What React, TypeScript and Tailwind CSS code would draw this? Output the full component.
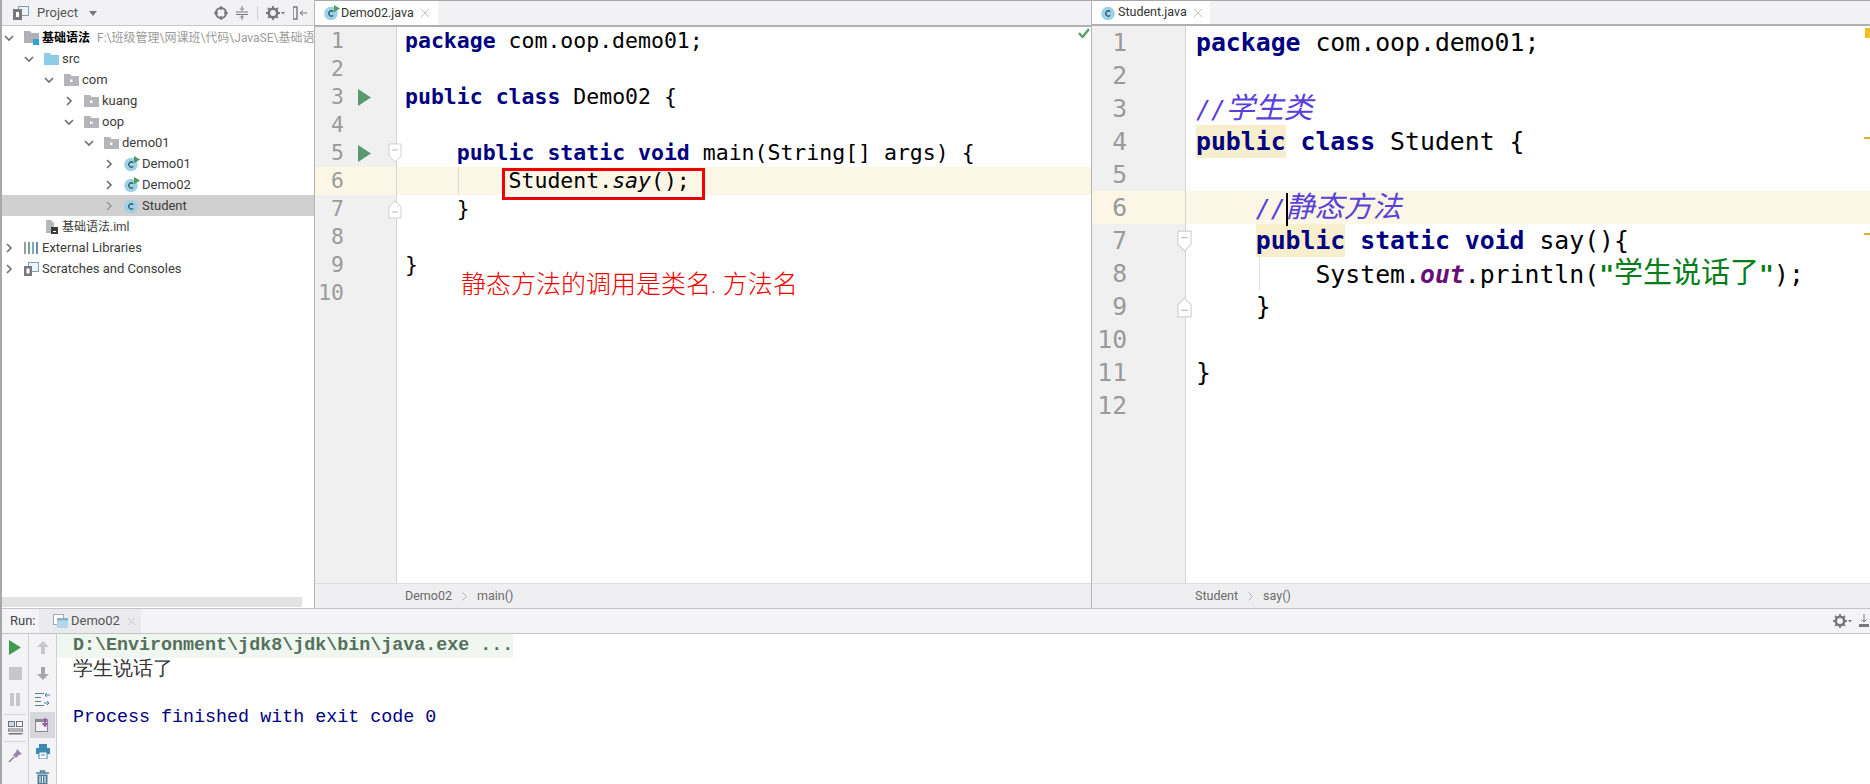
import React from "react";

const SANS = "font-['Roboto','Noto_Sans_CJK_SC',sans-serif]";
const MONO = "font-['DejaVu_Sans_Mono','Noto_Sans_CJK_SC',monospace]";

const Chevron = ({ open, light }: { open?: boolean; light?: boolean }) => (
  <svg width="12" height="12" viewBox="0 0 12 12" className="shrink-0">
    <path d={open ? "M2 4l4 4 4-4" : "M4 2l4 4-4 4"} fill="none" stroke={light ? "#9a9a9a" : "#6e6e6e"} strokeWidth="1.6" />
  </svg>
);

const Folder = ({ color = "#b4b4ba", dot = true }: { color?: string; dot?: boolean }) => (
  <svg width="15" height="13" viewBox="0 0 15 13" className="shrink-0">
    <path d="M0 1h6l1.5 2H15v10H0z" fill={color} />
    {dot && <rect x="6" y="6.5" width="2.5" height="2.5" fill="#fff" />}
  </svg>
);

const ModuleIcon = () => (
  <svg width="16" height="16" viewBox="0 0 16 16" className="shrink-0">
    <path d="M0 1h6l1.5 2H15v10H0z" fill="#b0b0b6" />
    <rect x="9" y="9" width="6" height="6" fill="#2fa3d8" />
  </svg>
);

const ClassIcon = ({ run, size = 14 }: { run?: boolean; size?: number }) => (
  <svg width={size + 2} height={size + 2} viewBox="0 0 16 16" className="shrink-0">
    <circle cx="7" cy="8.5" r="6.8" fill="#9ed0e6" />
    <path d="M9.2 6.6a2.6 2.6 0 1 0 0 3.8" fill="none" stroke="#28546a" strokeWidth="1.2" />
    {run && <path d="M10 0l6 3.6-6 3.6z" fill="#4f9a5e" />}
  </svg>
);

const ImlIcon = () => (
  <svg width="14" height="15" viewBox="0 0 14 15" className="shrink-0">
    <path d="M2 1h5l3 3v4H7v6H2z" fill="#b8b8bc" />
    <rect x="7" y="8" width="7" height="7" fill="#3c3c3c" />
    <rect x="9" y="12" width="3" height="1" fill="#fff" />
  </svg>
);

const LibIcon = () => (
  <svg width="15" height="14" viewBox="0 0 15 14" className="shrink-0">
    <rect x="0" y="1" width="2" height="12" fill="#9a9aa0" />
    <rect x="4" y="1" width="2" height="12" fill="#6fa880" />
    <rect x="8" y="1" width="2" height="12" fill="#7fa6c8" />
    <rect x="12" y="1" width="2" height="12" fill="#6a90b8" />
  </svg>
);

const ScratchIcon = () => (
  <svg width="15" height="14" viewBox="0 0 15 14" className="shrink-0">
    <rect x="4.5" y="0.5" width="10" height="9" fill="#eef4f8" stroke="#7aa0bc" />
    <rect x="0" y="4" width="8" height="10" fill="#77777c" />
    <rect x="2.5" y="6.5" width="3" height="5" fill="#fff" />
  </svg>
);

type Row = { d: number; arrow?: "o" | "c"; icon: React.ReactNode; label: React.ReactNode; sel?: boolean };

const rows: Row[] = [
  {
    d: 0, arrow: "o", icon: <ModuleIcon />,
    label: (
      <span className="text-[12px]">
        <span className="font-bold text-black">基础语法</span>
        <span className="ml-[7px] text-[#9b9b9b]">{"F:\\班级管理\\网课班\\代码\\JavaSE\\基础语"}</span>
      </span>
    ),
  },
  { d: 1, arrow: "o", icon: <Folder color="#8fcbe6" dot={false} />, label: "src" },
  { d: 2, arrow: "o", icon: <Folder />, label: "com" },
  { d: 3, arrow: "c", icon: <Folder />, label: "kuang" },
  { d: 3, arrow: "o", icon: <Folder />, label: "oop" },
  { d: 4, arrow: "o", icon: <Folder />, label: "demo01" },
  { d: 5, arrow: "c", icon: <ClassIcon run />, label: "Demo01" },
  { d: 5, arrow: "c", icon: <ClassIcon run />, label: "Demo02" },
  { d: 5, arrow: "c", icon: <ClassIcon />, label: "Student", sel: true },
  { d: 1, icon: <ImlIcon />, label: <span className="text-[12px]">基础语法.iml</span> },
  { d: 0, arrow: "c", icon: <LibIcon />, label: "External Libraries" },
  { d: 0, arrow: "c", icon: <ScratchIcon />, label: "Scratches and Consoles" },
];

const Gear = () => (
  <svg width="20" height="14" viewBox="0 0 20 14">
    <circle cx="7" cy="7" r="4.2" fill="none" stroke="#77777c" strokeWidth="2.6" />
    <path d="M7 0v14M0 7h14M2 2l10 10M12 2L2 12" stroke="#77777c" strokeWidth="1.8" strokeDasharray="2.4 9.2" />
    <path d="M15 6h4l-2 2.5z" fill="#77777c" />
  </svg>
);

const Sidebar = () => (
  <div className={`flex h-full w-[313px] shrink-0 flex-col border-r border-[#b4b4b4] bg-white ${SANS}`}>
    <div className="flex h-[26px] shrink-0 items-center border-b border-[#c8c8c8] bg-[#f2f2f4] pl-[11px] pr-[7px] text-[13px] text-[#555]">
      <svg width="16" height="14" viewBox="0 0 16 14">
        <rect x="5.5" y="0.5" width="10" height="9" fill="#eef4f8" stroke="#7aa0bc" />
        <rect x="0" y="3" width="9" height="11" fill="#77777c" />
        <rect x="3" y="6" width="3" height="5" fill="#fff" />
      </svg>
      <span className="ml-[8px]">Project</span>
      <svg width="8" height="6" viewBox="0 0 8 6" className="ml-[11px]"><path d="M0 1h8L4 6z" fill="#77777c" /></svg>
      <div className="flex-1" />
      <svg width="14" height="14" viewBox="0 0 14 14">
        <circle cx="7" cy="7" r="5" fill="none" stroke="#77777c" strokeWidth="2.2" />
        <path d="M7 0v4M7 10v4M0 7h4M10 7h4" stroke="#77777c" strokeWidth="1.5" />
      </svg>
      <svg width="14" height="14" viewBox="0 0 14 14" className="ml-[7px]">
        <path d="M1 6h12M1 8.5h12M7 0v4M5 2.4L7 4.4 9 2.4M7 14v-4M5 11.6L7 9.6 9 11.6" fill="none" stroke="#77777c" />
      </svg>
      <div className="mx-[8px] h-[14px] w-px bg-[#d0d0d0]" />
      <Gear />
      <svg width="14" height="14" viewBox="0 0 14 14" className="ml-[7px]">
        <rect x="0" y="1" width="4" height="12" fill="none" stroke="#77777c" strokeWidth="1.4" />
        <path d="M7 7h7M7 7l3-2.5M7 7l3 2.5" fill="none" stroke="#77777c" />
      </svg>
    </div>
    <div className="min-h-0 flex-1 overflow-hidden pt-[1px]">
      {rows.map((r, i) => (
        <div
          key={i}
          className={`flex h-[21px] items-center whitespace-nowrap text-[13px] text-[#3c3c3c] ${r.sel ? "bg-[#d0d0d0]" : ""}`}
          style={{ paddingLeft: 1 + r.d * 20 }}
        >
          <span className="flex w-[21px] shrink-0 items-center justify-start">
            {r.arrow && <Chevron open={r.arrow === "o"} light={r.sel} />}
          </span>
          <span className="flex w-[17px] shrink-0 items-center">{r.icon}</span>
          <span className="ml-[1px]">{r.label}</span>
        </div>
      ))}
    </div>
    <div className="mb-[1px] h-[10px] w-[300px] shrink-0 bg-[#e2e2e2]" />
  </div>
);

const K = ({ children }: { children: React.ReactNode }) => <span className="font-bold text-[#000080]">{children}</span>;
const Cjk = ({ children }: { children: React.ReactNode }) => <span className="text-[29px]">{children}</span>;

const Fold = ({ end, w = 14, h = 20 }: { end?: boolean; w?: number; h?: number }) => (
  <svg width={w} height={h} viewBox="0 0 14 20" className="shrink-0">
    <path
      d={end ? "M1 19V8l6-6 6 6v11z" : "M1 1h12v12l-6 6-6-6z"}
      fill="#fff"
      stroke="#d0d0d0"
    />
    <path d={end ? "M4 13h6" : "M4 7h6"} stroke="#b8b8b8" />
  </svg>
);

const Run = () => (
  <svg width="13" height="17" viewBox="0 0 13 17" className="shrink-0"><path d="M0 0l13 8.5L0 17z" fill="#5a9a70" /></svg>
);

const Tab = ({ name, run, w, h }: { name: string; run?: boolean; w: string; h: string }) => (
  <div className={`flex shrink-0 border-t border-[#a8a8a8] border-b-2 border-b-[#b0b0b0] bg-[#f2f2f4] ${h} ${SANS}`}>
    <div className={`flex h-full items-center bg-white pl-[9px] text-[12.5px] text-[#333] ${w}`}>
      <ClassIcon run={run} />
      <span className="ml-[1px]">{name}</span>
      <svg width="8" height="8" viewBox="0 0 8 8" className="ml-[7px]"><path d="M0 0l8 8M8 0L0 8" stroke="#c4c4c4" /></svg>
    </div>
  </div>
);

const leftLines: { run?: boolean; fold?: "s" | "e"; hl?: boolean; c?: React.ReactNode }[] = [
  { c: <><K>package</K> com.oop.demo01;</> },
  {},
  { run: true, c: <><K>public</K> <K>class</K> Demo02 {"{"}</> },
  {},
  { run: true, fold: "s", c: <>{"    "}<K>public</K> <K>static</K> <K>void</K> main(String[] args) {"{"}</> },
  { hl: true, c: <>{"        "}Student.<i>say</i>();</> },
  { fold: "e", c: <>{"    }"}</> },
  {},
  { c: "}" },
  {},
];

const LeftEditor = () => (
  <div className="flex h-full w-[777px] shrink-0 flex-col border-r border-[#b4b4b4] bg-white">
    <Tab name="Demo02.java" run w="w-[123px]" h="h-[27px]" />
    <div className="relative flex min-h-0 flex-1 flex-col">
      {leftLines.map((l, i) => (
        <div key={i} className={`flex h-[28px] shrink-0 items-center ${l.hl ? "bg-[#fcf6e6]" : ""}`}>
          <div className={`flex h-full w-[82px] shrink-0 items-center border-r border-[#d4d4d4] ${l.hl ? "" : "bg-[#f0f0f1]"}`}>
            <span className={`w-[29px] shrink-0 text-right text-[21.4px] text-[#9a9a9a] ${MONO}`}>{i + 1}</span>
            <span className="ml-[14px] w-[13px] shrink-0">{l.run && <Run />}</span>
            <span className="ml-[17px]">{l.fold && <Fold end={l.fold === "e"} />}</span>
          </div>
          <pre className={`ml-[8px] text-[21.5px] leading-[28px] text-black ${MONO}`}>{l.c}</pre>
        </div>
      ))}
      <div className="w-[82px] flex-1 border-r border-[#d4d4d4] bg-[#f0f0f1]" />
      <div className="absolute left-[143px] top-[140px] h-[28px] w-px bg-[#dcdcdc]" />
      <div className="absolute left-[187px] top-[141px] h-[32px] w-[203px] border-[3px] border-[#f00000]" />
      <div className={`absolute left-[146px] top-[241px] whitespace-pre text-[25px] font-extralight leading-[34px] text-[#f00000] ${SANS}`}>静态方法的调用是类名. 方法名</div>
      <svg width="12" height="10" viewBox="0 0 12 10" className="absolute right-[1px] top-[1px]">
        <path d="M1 5l3.5 4L11 1" fill="none" stroke="#5f9a6e" strokeWidth="2.4" />
      </svg>
    </div>
    <Crumb a="Demo02" b="main()" ml="ml-[90px]" gap="ml-[10px]" />
  </div>
);

const Crumb = ({ a, b, ml, gap }: { a: string; b: string; ml: string; gap: string }) => (
  <div className={`flex h-[25px] shrink-0 items-center border-t border-[#dcdcdc] bg-[#efeff1] text-[12.5px] text-[#6a6a6a] ${SANS}`}>
    <span className={ml}>{a}</span>
    <svg width="5" height="9" viewBox="0 0 5 9" className={gap}><path d="M0.5 0.5l4 4-4 4" fill="none" stroke="#b0b0b0" /></svg>
    <span className={gap}>{b}</span>
  </div>
);

const Word = ({ children }: { children: React.ReactNode }) => (
  <span className="inline-block h-[33px] bg-[#f7eecd] align-top font-bold text-[#000080]">{children}</span>
);

const rightLines: { fold?: "s" | "e"; hl?: boolean; c?: React.ReactNode }[] = [
  { c: <><K>package</K> com.oop.demo01;</> },
  {},
  { c: <i className="text-[#5840d8]">//<Cjk>学生类</Cjk></i> },
  { c: <><Word>public</Word> <K>class</K> Student {"{"}</> },
  {},
  { hl: true, c: <i className="text-[#5840d8]">{"    //"}<span className="relative"><span className="absolute left-0 top-[-1px] h-[33px] w-[2px] bg-black" /></span><Cjk>静态方法</Cjk></i> },
  { fold: "s", c: <>{"    "}<Word>public</Word> <K>static</K> <K>void</K> say(){"{"}</> },
  { c: <>{"        "}System.<b className="italic text-[#660e7a]">out</b>.println(<span className="font-bold text-[#067d17]">"<Cjk><span className="font-normal">学生说话了</span></Cjk>"</span>);</> },
  { fold: "e", c: <>{"    }"}</> },
  {},
  { c: "}" },
  {},
];

const RightEditor = () => (
  <div className="flex h-full min-w-0 flex-1 flex-col bg-white">
    <Tab name="Student.java" w="w-[118px]" h="h-[26px]" />
    <div className="relative flex min-h-0 flex-1 flex-col overflow-hidden">
      {rightLines.map((l, i) => (
        <div key={i} className={`flex h-[33px] shrink-0 items-center ${l.hl ? "bg-[#fcf6e6]" : ""}`}>
          <div className={`flex h-full w-[94px] shrink-0 items-center border-r border-[#d4d4d4] ${l.hl ? "" : "bg-[#f0f0f1]"}`}>
            <span className={`w-[35px] shrink-0 text-right text-[24.7px] text-[#9a9a9a] ${MONO}`}>{i + 1}</span>
            <span className="ml-[49px]">{l.fold && <Fold end={l.fold === "e"} w={17} h={22} />}</span>
          </div>
          <pre className={`ml-[10px] h-[33px] text-[24.8px] leading-[33px] text-black ${MONO}`}>{l.c}</pre>
        </div>
      ))}
      <div className="w-[94px] flex-1 border-r border-[#d4d4d4] bg-[#f0f0f1]" />
      <div className="absolute left-[167px] top-[231px] h-[33px] w-px bg-[#e0e0e0]" />
      <div className="absolute right-0 top-[2px] h-[10px] w-[5px] bg-[#f0c020]" />
      <div className="absolute right-0 top-[111px] h-[2px] w-[6px] bg-[#e8b030]" />
      <div className="absolute right-0 top-[207px] h-[2px] w-[6px] bg-[#e8b030]" />
    </div>
    <Crumb a="Student" b="say()" ml="ml-[103px]" gap="ml-[10px]" />
  </div>
);

const ToolCell = ({ children, sel }: { children: React.ReactNode; sel?: boolean }) => (
  <div className={`flex h-[26px] w-[25px] shrink-0 items-center justify-center ${sel ? "bg-[#d8d8dc]" : ""}`}>{children}</div>
);

const RunPanel = () => (
  <div className="flex min-h-0 flex-1 flex-col">
    <div className={`flex h-[26px] shrink-0 items-center border-y border-[#c4c4c4] bg-[#f4f4f6] text-[13px] text-[#444] ${SANS}`}>
      <span className="ml-[8px] w-[29px]">Run:</span>
      <div className="flex h-full w-[102px] items-center bg-[#ebebed] pl-[14px]">
        <svg width="15" height="14" viewBox="0 0 15 14">
          <rect x="0.5" y="0.5" width="10" height="10" fill="#fff" stroke="#a8a8ac" />
          <rect x="4" y="4" width="11" height="10" fill="#b4d8ea" />
          <rect x="4" y="4" width="11" height="2.5" fill="#7fb4d0" />
        </svg>
        <span className="ml-[3px] text-[#555]">Demo02</span>
        <svg width="7" height="7" viewBox="0 0 7 7" className="ml-[8px]"><path d="M0 0l7 7M7 0L0 7" stroke="#c8c8c8" /></svg>
      </div>
      <div className="flex-1" />
      <Gear />
      <svg width="10" height="14" viewBox="0 0 10 14" className="ml-[6px] mr-[1px]">
        <path d="M5 0v8M2.5 5.5L5 8l2.5-2.5" fill="none" stroke="#77777c" />
        <rect x="0" y="10" width="10" height="3" fill="#77777c" />
      </svg>
    </div>
    <div className="flex min-h-0 flex-1">
      <div className="flex w-[27px] shrink-0 flex-col items-center border-r border-[#d0d0d0] bg-[#f4f4f6]">
        <ToolCell><svg width="12" height="15" viewBox="0 0 12 15"><path d="M0 0l12 7.5L0 15z" fill="#3f9c50" /></svg></ToolCell>
        <ToolCell><div className="h-[13px] w-[13px] bg-[#c8c8cc]" /></ToolCell>
        <ToolCell><div className="flex gap-[2px]"><div className="h-[13px] w-[4px] bg-[#c8c8cc]" /><div className="h-[13px] w-[4px] bg-[#c8c8cc]" /></div></ToolCell>
        <div className="mt-[2px] h-px w-[22px] bg-[#d4d4d4]" />
        <ToolCell>
          <svg width="15" height="14" viewBox="0 0 15 14">
            <rect x="0.5" y="0.5" width="6" height="5" fill="#c8dcea" stroke="#6f7478" />
            <rect x="8.5" y="0.5" width="6" height="5" fill="none" stroke="#6f7478" />
            <rect x="0.5" y="8" width="14" height="2" fill="none" stroke="#6f7478" />
            <rect x="0.5" y="12" width="14" height="1.5" fill="#6f7478" />
          </svg>
        </ToolCell>
        <div className="h-px w-[22px] bg-[#d4d4d4]" />
        <ToolCell>
          <svg width="15" height="15" viewBox="0 0 15 15">
            <path d="M1 14l5-5" stroke="#8a7a96" strokeWidth="1.5" />
            <path d="M9 1l5 5-3 1-3 3-3-3 3-3z" fill="#9a86a8" />
          </svg>
        </ToolCell>
      </div>
      <div className="flex w-[28px] shrink-0 flex-col items-center border-r border-[#d0d0d0] bg-[#f4f4f6]">
        <ToolCell><svg width="12" height="13" viewBox="0 0 12 13"><path d="M6 0l6 6H8v7H4V6H0z" fill="#c8c8cc" /></svg></ToolCell>
        <ToolCell><svg width="12" height="13" viewBox="0 0 12 13"><path d="M6 13l6-6H8V0H4v7H0z" fill="#a8a8ac" /></svg></ToolCell>
        <ToolCell>
          <svg width="15" height="15" viewBox="0 0 15 15">
            <path d="M0 1.5h9M0 5.5h6M0 9.5h6M0 13.5h9" stroke="#5a7f96" />
            <path d="M15 3H10l2-2M10 3l2 2M9 11h5l-2-2M14 11l-2 2" fill="none" stroke="#3f88b4" />
          </svg>
        </ToolCell>
        <ToolCell sel>
          <svg width="15" height="14" viewBox="0 0 15 14">
            <rect x="0.5" y="1.5" width="12" height="12" fill="#f2f2f2" stroke="#8a8a8e" />
            <rect x="0.5" y="1.5" width="12" height="2.5" fill="#8a8a8e" />
            <path d="M10 0v7M7.5 5L10 8l2.5-3" fill="none" stroke="#a04fb0" strokeWidth="1.6" />
          </svg>
        </ToolCell>
        <ToolCell>
          <svg width="14" height="15" viewBox="0 0 14 15">
            <rect x="3" y="0" width="8" height="4" fill="#3f88b4" />
            <rect x="0" y="4" width="14" height="6" fill="#3f88b4" />
            <rect x="3" y="8" width="8" height="7" fill="#fff" stroke="#3f88b4" />
            <path d="M5 11h4" stroke="#3f88b4" />
          </svg>
        </ToolCell>
        <ToolCell>
          <svg width="13" height="15" viewBox="0 0 13 15">
            <path d="M0 3h13M4.5 3V1h4v2" fill="none" stroke="#4f7f9a" strokeWidth="1.4" />
            <path d="M1.5 4.5h10V15h-10z" fill="#4f7f9a" />
            <path d="M4 6v7M6.5 6v7M9 6v7" stroke="#fff" />
          </svg>
        </ToolCell>
      </div>
      <div className={`min-w-0 flex-1 text-[18.35px] leading-[24px] ${MONO}`}>
        <div className="flex">
          <pre className="bg-[#eff7f0] pl-[16px] font-bold text-[#55705c]">{"D:\\Environment\\jdk8\\jdk\\bin\\java.exe ..."}</pre>
        </div>
        <pre className="pl-[16px] text-[20px] font-extralight text-[#333]">学生说话了</pre>
        <div className="h-[24px]" />
        <pre className="pl-[16px] text-[#000080]">Process finished with exit code 0</pre>
      </div>
    </div>
  </div>
);

export default function App() {
  return (
    <div className="flex h-[784px] w-[1870px] flex-col overflow-hidden border-l-2 border-[#a8a8a8] bg-white">
      <div className="flex h-[608px] shrink-0">
        <Sidebar />
        <LeftEditor />
        <RightEditor />
      </div>
      <RunPanel />
    </div>
  );
}
